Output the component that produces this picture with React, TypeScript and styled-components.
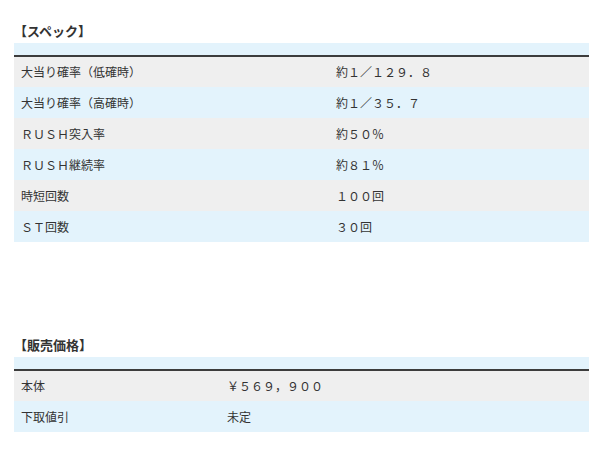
import React from 'react';
import styled, { createGlobalStyle } from 'styled-components';

const GlobalStyle = createGlobalStyle`
  body {
    margin: 0;
    background: #ffffff;
    font-family: "Noto Sans CJK JP", "Noto Sans", sans-serif;
    color: #333333;
  }
`;

type Row = { label: string; value: string };

const specRows: Row[] = [
  { label: '大当り確率（低確時）', value: '約１／１２９．８' },
  { label: '大当り確率（高確時）', value: '約１／３５．７' },
  { label: 'ＲＵＳＨ突入率', value: '約５０％' },
  { label: 'ＲＵＳＨ継続率', value: '約８１％' },
  { label: '時短回数', value: '１００回' },
  { label: 'ＳＴ回数', value: '３０回' },
];

const priceRows: Row[] = [
  { label: '本体', value: '￥５６９，９００' },
  { label: '下取値引', value: '未定' },
];

const Page = styled.div`
  padding: 21px 11px 0 14px;
  display: flex;
  flex-direction: column;
  gap: 93px;
`;

const Section = styled.section`
  display: flex;
  flex-direction: column;
  gap: 2px;
`;

const Title = styled.h2`
  margin: 0;
  font-size: 13px;
  font-weight: bold;
  line-height: 20px;
  color: #333333;
`;

const Table = styled.table`
  width: 100%;
  border-collapse: collapse;
  font-size: 12px;
`;

const HeadRow = styled.tr`
  background: #e3f3fc;
  border-bottom: 2px solid #3c3c3c;
`;

const HeadCell = styled.th`
  height: 12px;
  padding: 0;
`;

const BodyRow = styled.tr<{ $alt: boolean }>`
  background: ${({ $alt }) => ($alt ? '#e3f3fc' : '#efefef')};
`;

const Cell = styled.td<{ $width?: number }>`
  height: 31px;
  padding: 0 7px;
  box-sizing: border-box;
  vertical-align: middle;
  line-height: 16px;
  color: #333333;
  width: ${({ $width }) => ($width ? `${$width}px` : 'auto')};
`;

const SpecTable: React.FC<{ title: string; rows: Row[]; labelWidth: number }> = ({
  title,
  rows,
  labelWidth,
}) => (
  <Section>
    <Title>{title}</Title>
    <Table>
      <thead>
        <HeadRow>
          <HeadCell />
          <HeadCell />
        </HeadRow>
      </thead>
      <tbody>
        {rows.map((row, i) => (
          <BodyRow key={row.label} $alt={i % 2 === 1}>
            <Cell $width={labelWidth}>{row.label}</Cell>
            <Cell>{row.value}</Cell>
          </BodyRow>
        ))}
      </tbody>
    </Table>
  </Section>
);

export default function App() {
  return (
    <>
      <GlobalStyle />
      <Page>
        <SpecTable title="【スペック】" rows={specRows} labelWidth={315} />
        <SpecTable title="【販売価格】" rows={priceRows} labelWidth={206} />
      </Page>
    </>
  );
}
